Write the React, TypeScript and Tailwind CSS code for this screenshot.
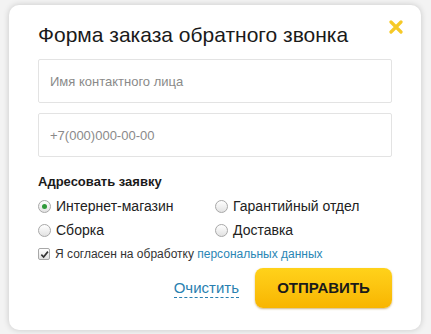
import { useState } from 'react';

const font = { fontFamily: '"Liberation Sans", Arial, sans-serif' };

export default function App() {
  const [target, setTarget] = useState('shop');
  const [agree, setAgree] = useState(true);

  const options = [
    { id: 'shop', label: 'Интернет-магазин' },
    { id: 'warranty', label: 'Гарантийный отдел' },
    { id: 'assembly', label: 'Сборка' },
    { id: 'delivery', label: 'Доставка' },
  ];

  return (
    <div className="w-[431px] h-[334px] bg-[#f3f3f3] overflow-hidden pt-[5px] pl-[9px]" style={font}>
      <div className="relative w-[412px] h-[325px] bg-white rounded-[10px] shadow-[0_0_6px_rgba(0,0,0,0.18)] pl-[29px] pr-[29px] pt-[17px]">
        <button className="absolute right-[18px] top-[15px] w-[14px] h-[14px]" aria-label="Закрыть">
          <svg viewBox="0 0 14 14" className="w-[14px] h-[14px]">
            <path d="M2 2 L12 12 M12 2 L2 12" stroke="#f6c927" strokeWidth="3.2" strokeLinecap="round" />
          </svg>
        </button>

        <h2 className="text-[21px] leading-[26px] text-[#1a1a1a]">Форма заказа обратного звонка</h2>

        <input
          placeholder="Имя контактного лица"
          className="mt-[11px] block w-[354px] h-[44px] border border-[#e3e3e3] rounded-[2px] px-[11px] text-[13px] placeholder:text-[#8a8a8a] outline-none"
        />
        <input
          placeholder="+7(000)000-00-00"
          className="mt-[10px] block w-[354px] h-[44px] border border-[#e3e3e3] rounded-[2px] px-[11px] text-[13px] placeholder:text-[#8a8a8a] outline-none"
        />

        <div className="mt-[16px] text-[13px] font-bold text-[#1a1a1a] leading-[18px]">Адресовать заявку</div>

        <div className="mt-[6px] grid grid-cols-[177px_1fr] gap-y-[6px] text-[14px] text-[#222]">
          {options.map((o) => (
            <label key={o.id} className="flex items-center gap-[5px] h-[18px] cursor-pointer">
              <span
                onClick={() => setTarget(o.id)}
                className="w-[13px] h-[13px] rounded-full border border-[#a8a8a8] bg-gradient-to-b from-white to-[#e2e2e2] flex items-center justify-center"
              >
                {target === o.id && <span className="w-[5px] h-[5px] rounded-full bg-[#2f9a3a]" />}
              </span>
              {o.label}
            </label>
          ))}
        </div>

        <label className="mt-[6px] flex items-center gap-[5px] text-[12px] text-[#333] h-[18px]">
          <span
            onClick={() => setAgree(!agree)}
            className="w-[12px] h-[12px] rounded-[2px] border border-[#a8a8a8] bg-gradient-to-b from-white to-[#e2e2e2] flex items-center justify-center"
          >
            {agree && (
              <svg viewBox="0 0 10 10" className="w-[9px] h-[9px]">
                <path d="M1.5 5.2 L4 7.8 L8.8 1.8" stroke="#333" strokeWidth="1.8" fill="none" />
              </svg>
            )}
          </span>
          <span>
            Я согласен на обработку <span className="text-[#2a86b5]">персональных данных</span>
          </span>
        </label>

        <div className="mt-[5px] flex items-center justify-end gap-[16px] w-[354px]">
          <button className="text-[15px] text-[#2a7fb0] border-b border-dashed border-[#2a7fb0] leading-[18px]">
            Очистить
          </button>
          <button className="w-[137px] h-[40px] rounded-[8px] bg-gradient-to-b from-[#ffd21a] to-[#f8b500] shadow-[0_1px_2px_rgba(160,110,0,0.5)] text-[15px] font-bold text-[#1a1a1a]">
            ОТПРАВИТЬ
          </button>
        </div>
      </div>
    </div>
  );
}
